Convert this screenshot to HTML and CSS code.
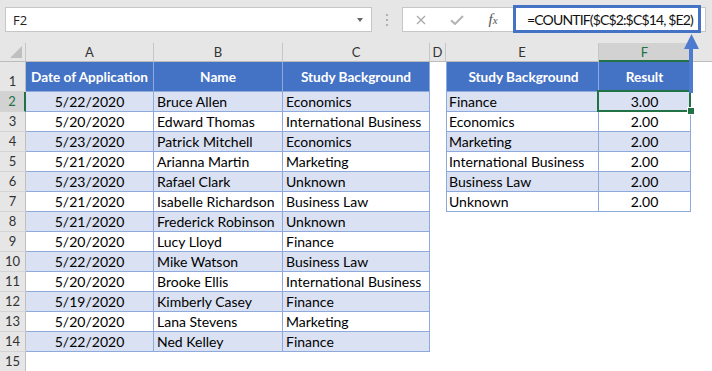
FILE: index.html
```html
<!DOCTYPE html>
<html>
<head>
<meta charset="utf-8">
<link rel="stylesheet" href="styles.css">
</head>
<body>
<div class="toolbar">
  <div class="namebox"><span>F2</span><span class="caret"></span></div>
  <div class="grip"><i></i><i></i><i></i></div>
  <div class="fbar">
    <span class="ico"><svg width="10" height="10" viewBox="0 0 10 10"><path d="M1 1L9 9M9 1L1 9" stroke="#a8a8a8" stroke-width="1.3" fill="none"/></svg></span>
    <span class="ico"><svg width="14" height="10" viewBox="0 0 14 10"><path d="M1 5.2L5 9L13 1" stroke="#b4b4b4" stroke-width="2" fill="none"/></svg></span>
    <span class="ico fx"><i>f<small>x</small></i></span>
    <div class="formula">=COUNTIF($C$2:$C$14, $E2)</div>
  </div>
</div>
<div class="sheet">
  <div class="row colhead">
    <div class="ch corner"><span class="tri"></span></div>
    <div class="ch">A</div><div class="ch">B</div><div class="ch">C</div><div class="ch">D</div><div class="ch">E</div><div class="ch selc">F</div><div class="ch last"></div>
  </div>
  <div class="row r1">
    <div class="rh">1</div>
    <div class="t h">Date of Application</div><div class="t h">Name</div><div class="t h">Study Background</div>
    <div class="c"></div>
    <div class="t h eL">Study Background</div><div class="t h">Result</div><div class="c"></div>
  </div>
  <div class="row">
    <div class="rh selr">2</div>
    <div class="t b ctr">5/22/2020</div><div class="t b">Bruce Allen</div><div class="t b">Economics</div>
    <div class="c"></div>
    <div class="t b eL">Finance</div><div class="t b ctr">3.00</div><div class="c"></div>
  </div>
  <div class="row">
    <div class="rh">3</div>
    <div class="t ctr">5/20/2020</div><div class="t">Edward Thomas</div><div class="t">International Business</div>
    <div class="c"></div>
    <div class="t eL">Economics</div><div class="t ctr">2.00</div><div class="c"></div>
  </div>
  <div class="row">
    <div class="rh">4</div>
    <div class="t b ctr">5/23/2020</div><div class="t b">Patrick Mitchell</div><div class="t b">Economics</div>
    <div class="c"></div>
    <div class="t b eL">Marketing</div><div class="t b ctr">2.00</div><div class="c"></div>
  </div>
  <div class="row">
    <div class="rh">5</div>
    <div class="t ctr">5/21/2020</div><div class="t">Arianna Martin</div><div class="t">Marketing</div>
    <div class="c"></div>
    <div class="t eL">International Business</div><div class="t ctr">2.00</div><div class="c"></div>
  </div>
  <div class="row">
    <div class="rh">6</div>
    <div class="t b ctr">5/23/2020</div><div class="t b">Rafael Clark</div><div class="t b">Unknown</div>
    <div class="c"></div>
    <div class="t b eL">Business Law</div><div class="t b ctr">2.00</div><div class="c"></div>
  </div>
  <div class="row">
    <div class="rh">7</div>
    <div class="t ctr">5/21/2020</div><div class="t">Isabelle Richardson</div><div class="t">Business Law</div>
    <div class="c"></div>
    <div class="t eL">Unknown</div><div class="t ctr">2.00</div><div class="c"></div>
  </div>
  <div class="row">
    <div class="rh">8</div>
    <div class="t b ctr">5/21/2020</div><div class="t b">Frederick Robinson</div><div class="t b">Unknown</div>
    <div class="c"></div><div class="c"></div><div class="c"></div><div class="c"></div>
  </div>
  <div class="row">
    <div class="rh">9</div>
    <div class="t ctr">5/20/2020</div><div class="t">Lucy Lloyd</div><div class="t">Finance</div>
    <div class="c"></div><div class="c"></div><div class="c"></div><div class="c"></div>
  </div>
  <div class="row">
    <div class="rh">10</div>
    <div class="t b ctr">5/22/2020</div><div class="t b">Mike Watson</div><div class="t b">Business Law</div>
    <div class="c"></div><div class="c"></div><div class="c"></div><div class="c"></div>
  </div>
  <div class="row">
    <div class="rh">11</div>
    <div class="t ctr">5/20/2020</div><div class="t">Brooke Ellis</div><div class="t">International Business</div>
    <div class="c"></div><div class="c"></div><div class="c"></div><div class="c"></div>
  </div>
  <div class="row">
    <div class="rh">12</div>
    <div class="t b ctr">5/19/2020</div><div class="t b">Kimberly Casey</div><div class="t b">Finance</div>
    <div class="c"></div><div class="c"></div><div class="c"></div><div class="c"></div>
  </div>
  <div class="row">
    <div class="rh">13</div>
    <div class="t ctr">5/20/2020</div><div class="t">Lana Stevens</div><div class="t">Marketing</div>
    <div class="c"></div><div class="c"></div><div class="c"></div><div class="c"></div>
  </div>
  <div class="row">
    <div class="rh">14</div>
    <div class="t b ctr">5/22/2020</div><div class="t b">Ned Kelley</div><div class="t b">Finance</div>
    <div class="c"></div><div class="c"></div><div class="c"></div><div class="c"></div>
  </div>
  <div class="row">
    <div class="rh">15</div>
    <div class="c"></div><div class="c"></div><div class="c"></div><div class="c"></div><div class="c"></div><div class="c"></div><div class="c"></div>
  </div>
  <div class="selection"></div>
  <div class="handle"></div>
  <svg class="arrow" width="20" height="62" viewBox="0 0 20 62"><rect x="7" y="14" width="4" height="46" fill="#4d7bd0"/><polygon points="9.5,1 2,16 17,16" fill="#4d7bd0"/></svg>
</div>
</body>
</html>
```
FILE: styles.css
```css
html, body {
  margin: 0;
  padding: 0;
  background: #fff;
}
body {
  width: 712px;
  height: 371px;
  overflow: hidden;
  font-family: Lato, "Open Sans", sans-serif;
  color: #000;
}
.toolbar {
  height: 43px;
  box-sizing: border-box;
  background: #e6e6e6;
  display: flex;
  align-items: flex-start;
  padding: 7px 0 0 5px;
}
.namebox {
  width: 367px;
  height: 25px;
  box-sizing: border-box;
  border: 1px solid #c6c6c6;
  background: #fff;
  display: flex;
  align-items: center;
  justify-content: space-between;
  padding: 0 8px 0 7px;
  font: 13px "Open Sans", sans-serif;
  color: #222;
}
.caret {
  width: 0;
  height: 0;
  border-left: 3.5px solid transparent;
  border-right: 3.5px solid transparent;
  border-top: 4px solid #666;
}
.grip {
  width: 30px;
  display: flex;
  flex-direction: column;
  align-items: center;
  gap: 3px;
  padding-top: 7px;
}
.grip i {
  width: 2px;
  height: 2px;
  background: #b0b0b0;
}
.fbar {
  width: 304px;
  height: 25px;
  box-sizing: border-box;
  border: 1px solid #c6c6c6;
  background: #fff;
  display: flex;
  align-items: center;
}
.ico {
  width: 36px;
  display: flex;
  justify-content: center;
  align-items: center;
}
.fx i {
  font: italic 15px "Liberation Serif", serif;
  color: #555;
}
.fx small {
  font-size: 11px;
}
.formula {
  align-self: flex-start;
  margin: -3px 0 0 2px;
  width: 188px;
  height: 28px;
  box-sizing: border-box;
  border: 3px solid #4472c4;
  background: #fff;
  padding-left: 11px;
  display: flex;
  align-items: center;
  white-space: nowrap;
  overflow: hidden;
  font: 14px Lato, sans-serif;
  letter-spacing: -0.85px;
  color: #111;
}
.sheet {
  position: relative;
}
.row {
  display: grid;
  grid-template-columns: 26px 128px 129px 147px 16px 153px 92px 1fr;
  height: 20px;
}
.row > div {
  box-sizing: border-box;
  display: flex;
  align-items: center;
  white-space: nowrap;
  overflow: hidden;
}
.colhead {
  height: 19px;
  background: #e6e6e6;
}
.ch {
  justify-content: center;
  border-right: 1px solid #c6c6c6;
  border-bottom: 1px solid #bcbcbc;
  font-size: 13px;
  color: #333;
}
.ch.last {
  border-right: 0;
}
.ch.selc {
  background: #d2d2d2;
  color: #217346;
  border-bottom: 2px solid #217346;
}
.corner {
  align-items: flex-end !important;
  justify-content: flex-end !important;
  padding: 0 3px 3px 0;
}
.tri {
  width: 0;
  height: 0;
  border-left: 12px solid transparent;
  border-bottom: 12px solid #bfbfbf;
}
.r1 {
  height: 30px;
}
.rh {
  background: #e6e6e6;
  border-right: 1px solid #bfbfbf;
  border-bottom: 1px solid #d4d4d4;
  justify-content: center;
  align-items: flex-end !important;
  line-height: 19px;
  font-size: 13px;
  color: #333;
}
.rh.selr {
  background: #d2d2d2;
  color: #217346;
  border-right: 2px solid #217346;
}
.t {
  border-right: 1px solid #8ea9db;
  border-bottom: 1px solid #8ea9db;
  padding-left: 3px;
  font-size: 14px;
}
.t.eL {
  border-left: 1px solid #8ea9db;
  padding-left: 2px;
}
.h {
  background: #4472c4;
  color: #fff;
  font-weight: 700;
  font-size: 13.6px;
  justify-content: center;
  padding-left: 0;
}
.b {
  background: #d9e1f2;
}
.ctr {
  justify-content: center;
  padding-left: 0;
}
.selection {
  position: absolute;
  left: 597px;
  top: 47px;
  width: 94px;
  height: 22px;
  box-sizing: border-box;
  border: 2px solid #217346;
}
.handle {
  position: absolute;
  left: 688px;
  top: 65px;
  width: 6px;
  height: 6px;
  background: #217346;
  box-shadow: 0 0 0 1px #fff;
}
.arrow {
  position: absolute;
  left: 682px;
  top: -10px;
}
```
